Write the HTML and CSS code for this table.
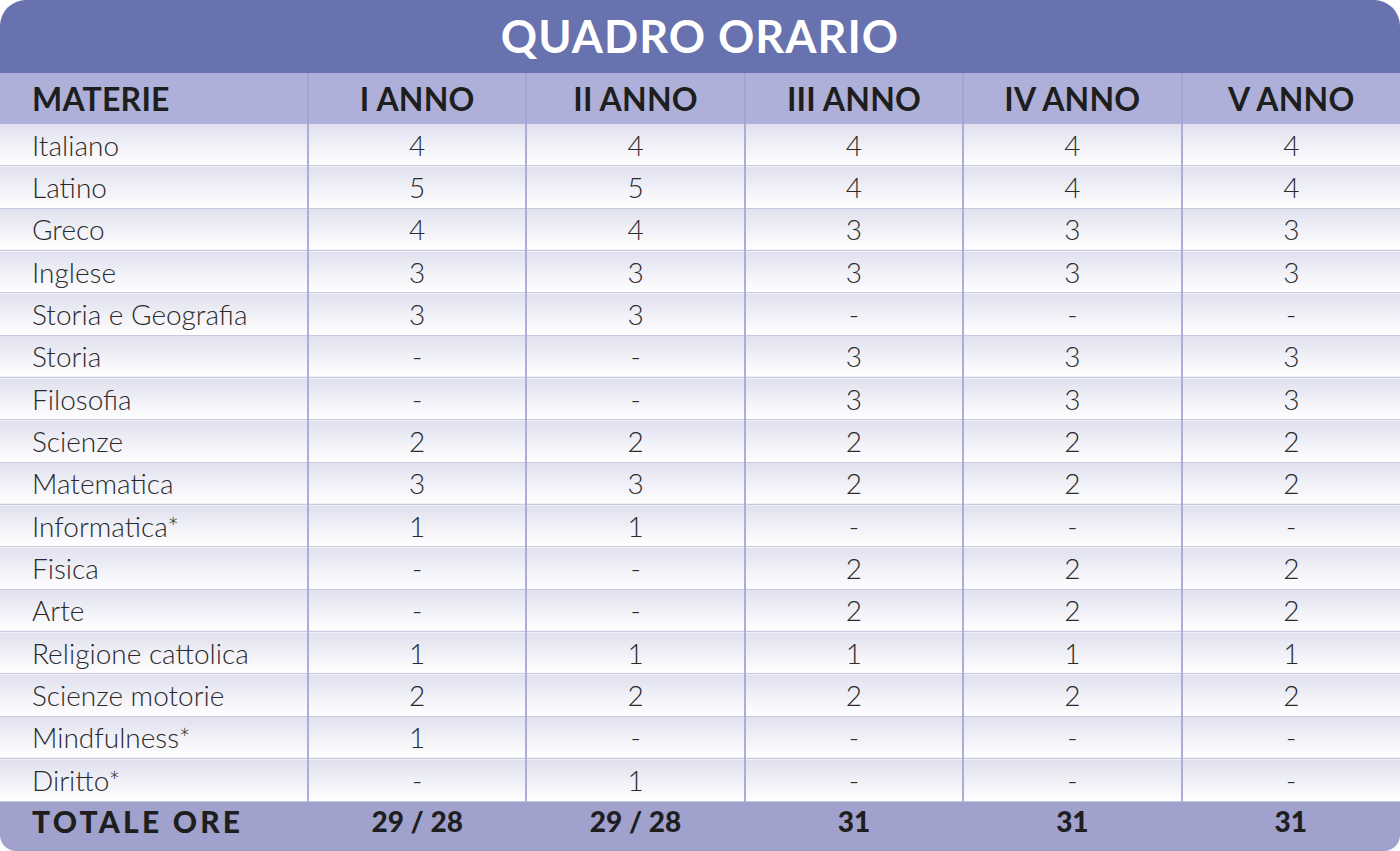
FILE: index.html
```html
<!DOCTYPE html>
<html lang="it">
<head>
<meta charset="utf-8">
<title>Quadro orario</title>
<link rel="stylesheet" href="styles.css">
</head>
<body>
<div class="card">
  <div class="title">QUADRO ORARIO</div>
  <table class="grid">
    <colgroup>
      <col class="c-subj"><col><col><col><col><col>
    </colgroup>
    <thead>
      <tr><th class="subj">MATERIE</th><th>I ANNO</th><th>II ANNO</th><th>III ANNO</th><th>IV ANNO</th><th>V ANNO</th></tr>
    </thead>
    <tbody>
      <tr><td class="subj">Italiano</td><td>4</td><td>4</td><td>4</td><td>4</td><td>4</td></tr>
      <tr><td class="subj">Latino</td><td>5</td><td>5</td><td>4</td><td>4</td><td>4</td></tr>
      <tr><td class="subj">Greco</td><td>4</td><td>4</td><td>3</td><td>3</td><td>3</td></tr>
      <tr><td class="subj">Inglese</td><td>3</td><td>3</td><td>3</td><td>3</td><td>3</td></tr>
      <tr><td class="subj">Storia e Geografia</td><td>3</td><td>3</td><td>-</td><td>-</td><td>-</td></tr>
      <tr><td class="subj">Storia</td><td>-</td><td>-</td><td>3</td><td>3</td><td>3</td></tr>
      <tr><td class="subj">Filosofia</td><td>-</td><td>-</td><td>3</td><td>3</td><td>3</td></tr>
      <tr><td class="subj">Scienze</td><td>2</td><td>2</td><td>2</td><td>2</td><td>2</td></tr>
      <tr><td class="subj">Matematica</td><td>3</td><td>3</td><td>2</td><td>2</td><td>2</td></tr>
      <tr><td class="subj">Informatica*</td><td>1</td><td>1</td><td>-</td><td>-</td><td>-</td></tr>
      <tr><td class="subj">Fisica</td><td>-</td><td>-</td><td>2</td><td>2</td><td>2</td></tr>
      <tr><td class="subj">Arte</td><td>-</td><td>-</td><td>2</td><td>2</td><td>2</td></tr>
      <tr><td class="subj">Religione cattolica</td><td>1</td><td>1</td><td>1</td><td>1</td><td>1</td></tr>
      <tr><td class="subj">Scienze motorie</td><td>2</td><td>2</td><td>2</td><td>2</td><td>2</td></tr>
      <tr><td class="subj">Mindfulness*</td><td>1</td><td>-</td><td>-</td><td>-</td><td>-</td></tr>
      <tr><td class="subj">Diritto*</td><td>-</td><td>1</td><td>-</td><td>-</td><td>-</td></tr>
    </tbody>
    <tfoot>
      <tr><td class="subj tot">TOTALE ORE</td><td>29 / 28</td><td>29 / 28</td><td>31</td><td>31</td><td>31</td></tr>
    </tfoot>
  </table>
</div>
</body>
</html>
```

FILE: styles.css
```css
html, body {
  margin: 0;
  padding: 0;
  background: #ffffff;
}

.card {
  width: 1400px;
  height: 851px;
  border-radius: 26px 26px 16px 16px;
  overflow: hidden;
  display: flex;
  flex-direction: column;
  font-family: Lato, "Liberation Sans", sans-serif;
}

.title {
  height: 73px;
  flex: none;
  background: #6772ae;
  color: #ffffff;
  font-size: 45px;
  font-weight: 700;
  line-height: 72px;
  text-align: center;
  letter-spacing: 1px;
}

.grid {
  width: 100%;
  flex: 1;
  border-collapse: collapse;
  table-layout: fixed;
}

.c-subj {
  width: 308px;
}

.grid th,
.grid td {
  padding: 0;
  text-align: center;
  white-space: nowrap;
}

.grid .subj {
  text-align: left;
  padding-left: 32px;
}

.grid thead th {
  height: 51px;
  background: #aeb0d9;
  color: #1e1e1e;
  font-size: 32px;
  font-weight: 700;
  letter-spacing: 0.2px;
  border-left: 2px solid #a2a5d3;
}

.grid thead th:first-child {
  border-left: none;
}

.grid tbody td {
  height: 41px;
  background: linear-gradient(#e0e0ef, #ffffff);
  color: #2b2b2b;
  font-size: 28px;
  font-weight: 300;
  border-top: 1px solid #c9c9df;
  border-left: 2px solid #abaed9;
}

.grid tbody tr:first-child td {
  border-top: none;
}

.grid tbody td:first-child {
  border-left: none;
}

.grid tfoot td {
  height: 50px;
  padding-bottom: 10px;
  box-sizing: border-box;
  background: #a0a1cd;
  color: #1e1e1e;
  font-size: 28px;
  font-weight: 900;
  border-top: 1px solid #c6c6dd;
}

.grid tfoot td.tot {
  letter-spacing: 3.2px;
  font-size: 30px;
}
```
